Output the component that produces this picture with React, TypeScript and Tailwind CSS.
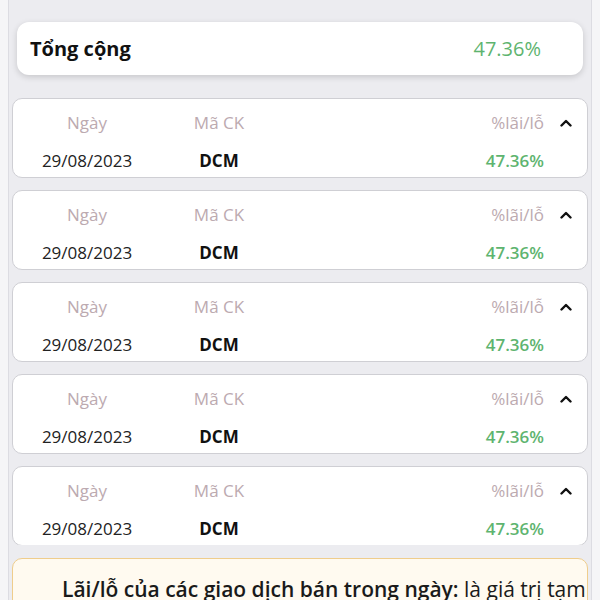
const rows = [0, 1, 2, 3, 4];

function Chevron() {
  return (
    <svg width="12" height="8" viewBox="0 0 12 8" fill="none" stroke="#111" strokeWidth="2.4" strokeLinecap="round" strokeLinejoin="round">
      <path d="M1.5 6.5 6 2l4.5 4.5" />
    </svg>
  );
}

function TradeCard() {
  return (
    <div className="h-[80px] shrink-0 rounded-[10px] border border-[#cfcfd4] bg-white pt-[11px]">
      <div className="flex h-[26px] items-center text-[17px] text-[#bcaab0]">
        <div className="w-[148px] text-center">Ngày</div>
        <div className="w-[116px] text-center">Mã CK</div>
        <div className="flex-1" />
        <div className="text-right">%lãi/lỗ</div>
        <div className="flex w-[43px] justify-center pl-[1px]">
          <Chevron />
        </div>
      </div>
      <div className="mt-[12px] flex h-[26px] items-center text-[17px]">
        <div className="w-[148px] text-center text-[#222]">29/08/2023</div>
        <div className="w-[116px] text-center font-bold text-[#111]">DCM</div>
        <div className="flex-1" />
        <div className="text-right font-semibold text-[#5eb46f]">47.36%</div>
        <div className="w-[43px]" />
      </div>
    </div>
  );
}

export default function App() {
  return (
    <div className="h-[600px] overflow-hidden bg-[#f5f5f7] px-[8px] font-['Open_Sans',sans-serif]">
      <div className="flex h-full flex-col border-x border-[#dcdce2] bg-[#ececf0] px-[3px]">
        <div className="mx-[5px] mt-[22px] flex h-[53px] shrink-0 items-center justify-between rounded-xl bg-white pl-[13px] pr-[42px] shadow-[0_2px_6px_rgba(0,0,0,0.16)]">
          <span className="text-[20px] font-bold text-[#111]">Tổng cộng</span>
          <span className="text-[20px] text-[#5eb46f]">47.36%</span>
        </div>

        <div className="mt-[23px] flex h-[447px] shrink-0 flex-col gap-[12px] overflow-hidden">
          {rows.map((i) => (
            <TradeCard key={i} />
          ))}
        </div>

        <div className="shrink-0 pt-[13px]">
          <div className="h-[70px] rounded-[10px] border-[1.5px] border-[#efcd8c] bg-[#fffaf0] pl-[49px] pt-[15px] text-[21px] text-[#1a1a1a]">
            <span className="font-semibold">Lãi/lỗ của các giao dịch bán trong ngày:</span> là giá trị tạm
          </div>
        </div>
      </div>
    </div>
  );
}
